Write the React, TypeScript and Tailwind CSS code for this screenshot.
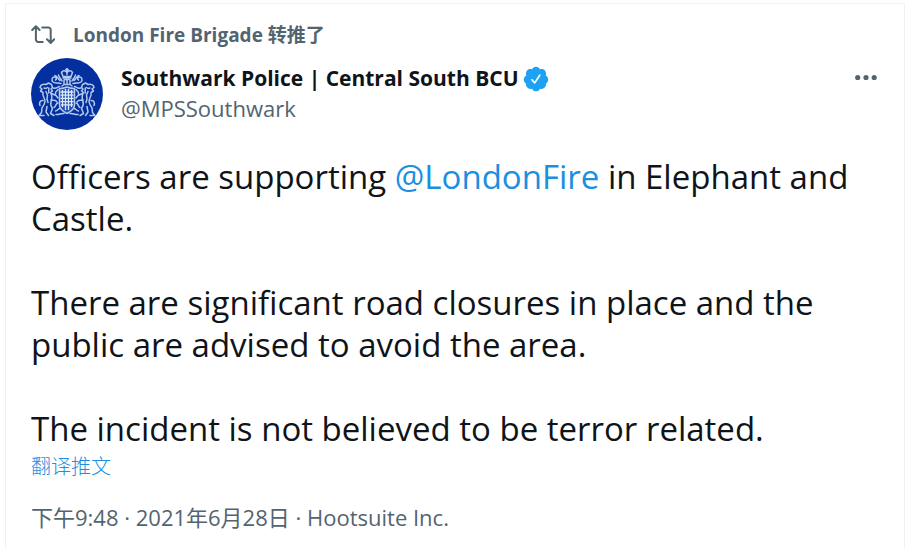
import type { ReactNode } from 'react'

function RetweetIcon() {
  return (
    <svg className="w-6 h-6 shrink-0" viewBox="0 0 24 24" fill="none" stroke="currentColor" strokeWidth="2" strokeLinecap="round" strokeLinejoin="round" aria-hidden="true">
      <path d="M1.200 7L4.900 3.200l3.700 3.800M4.900 3.800v12.700a2.400 2.400 0 0 0 2.400 2.400h4.400" />
      <path d="M11.200 4.400h6.100a2.400 2.400 0 0 1 2.400 2.400v12.700M16 16.200l3.700 3.800 3.500-3.800" />
    </svg>
  )
}

function VerifiedBadge() {
  return (
    <svg className="w-7 h-7 shrink-0" viewBox="0 0 24 24" fill="#1da1f2" role="img" aria-label="Verified account">
      <path d="M22.5 12.5c0-1.58-.875-2.95-2.148-3.6.154-.435.238-.905.238-1.4 0-2.21-1.71-3.998-3.818-3.998-.47 0-.92.084-1.336.25C14.818 2.415 13.51 1.5 12 1.5s-2.816.917-3.437 2.25c-.415-.165-.866-.25-1.336-.25-2.11 0-3.818 1.79-3.818 4 0 .494.083.964.237 1.4-1.272.65-2.147 2.018-2.147 3.6 0 1.495.782 2.798 1.942 3.486-.02.17-.032.34-.032.514 0 2.21 1.708 4 3.818 4 .47 0 .92-.086 1.335-.25.62 1.334 1.926 2.25 3.437 2.25 1.512 0 2.818-.916 3.437-2.25.415.163.865.248 1.336.248 2.11 0 3.818-1.79 3.818-4 0-.174-.012-.344-.033-.513 1.158-.687 1.943-1.99 1.943-3.484zm-6.616-3.334l-4.334 6.5c-.145.217-.382.334-.625.334-.143 0-.288-.04-.416-.126l-.115-.094-2.415-2.415c-.293-.293-.293-.768 0-1.06s.768-.294 1.06 0l1.77 1.767 3.825-5.74c.23-.345.696-.436 1.04-.207.346.23.44.696.21 1.04z" />
    </svg>
  )
}

// One side of the crest: lion supporter and mantling. Mirrored for the other side.
function Supporter() {
  return (
    <g>
      <path d="M15 26.500c-3-1-5.500.5-6 3l2 1.500-1.500 2 2.500 1.500M15 26.500l2.500-1.500 3 1.500 1 3-1.500 1.500 1.500 2-2 1.500M13 30l2 .5 1.500-1M12 35c-1 3 2 5 2 8 0 3-1.500 5-3 7l-.5 4.500-2.500 3h5M19.500 34.500c2 3.500 1.500 6.500.5 9.500-1 3 .5 5 1.500 6.500l-2 5 3.500 2M16 48.500l-1 5.500 2.500 3.500M20.500 35.500l4.500 2 2 2.500M19.800 42l4.700.5 1.500 1.500" />
      <path d="M15 33.500l1.500 3.500-.5 4 1 3.500M17.800 30v5M12 42.500c-3-.5-4 2.500-3 5" />
      <path d="M30 25.500c-3.500-1.500-5.500.5-8-1.500-2-1.600-1-5 1.500-5 2 0 2.500 2.500 1 3M29 22.500c-2-1-2.500-4.500-5-5M31 23c-1-2.500-3-3-3.500-6M28.500 28.500c-2 .5-3.500 2.500-6 1.500M27 31.500c-1 2-3 1.500-2.500 4.500M27 45c-2.500.5-2 3.500-4 4.500M29 50.500c-2 0-2.500 2.500-4.500 2.500M33 55.500c-3-.5-5 1.500-8 1" />
    </g>
  )
}

function CrestAvatar() {
  return (
    <svg className="w-18 h-18 shrink-0" viewBox="0 0 72 72" role="img" aria-label="Southwark Police">
      <circle cx="36" cy="36" r="36" fill="#04309f" />
      <g fill="none" stroke="#b3c9ee" strokeWidth="1.5" strokeLinecap="round" strokeLinejoin="round">
        <Supporter />
        <g transform="matrix(-1 0 0 1 72 0)">
          <Supporter />
        </g>
        <path d="M32 18.500l-1.500-4c1.500-2.500 4-2.300 5.500 0 1.500-2.300 4-2.500 5.500 0l-1.500 4zM36 10.500v6M34.800 11.500h2.400M32 20h8" />
        <path d="M33 22c1-1 5-1 6 0v4.500h-6zM36 22v4M31 28l2-1.500M41 28l-2-1.500" />
        <path d="M28.500 30.500c2.500 0 5-.5 7.500-1.500 2.500 1 5 1.500 7.500 1.500V47c0 4.500-3.500 6.500-7.500 8.500-4-2-7.500-4-7.500-8.500z" fill="#2450b0" />
      </g>
      <path d="M31.500 32v17M34.500 31v21M37.500 31v21M40.500 32v17M29.500 34h13M29.500 37.200h13M29.500 40.400h13M29.500 43.600h13M30 46.800h12" stroke="#dce8fb" strokeWidth="1.300" fill="none" />
    </svg>
  )
}

function Link({ children }: { children: ReactNode }) {
  return (
    <a href="#" className="text-[#1b8fe0] hover:underline">
      {children}
    </a>
  )
}

export default function App() {
  return (
    <main className="bg-white pl-[5px] pr-px pt-[3px] font-['Open_Sans','Noto_Sans_CJK_SC',sans-serif]">
      <article className="min-h-[calc(100vh-3px)] border-x border-t border-[#eff1f2] px-[25px] pt-[19px] text-[#536471]">
        <div className="flex h-6 items-center gap-[18px] text-[19px] font-bold">
          <RetweetIcon />
          <a href="#" className="hover:underline">London Fire Brigade 转推了</a>
        </div>

        <header className="mt-[11px] flex items-start gap-[18px]">
          <CrestAvatar />
          <div className="min-w-0 flex-1 pt-[6px]">
            <div className="flex h-[30px] items-center gap-[3px]">
              <a href="#" className="text-[21px] font-bold text-[#0f1419] hover:underline">
                Southwark Police | Central South BCU
              </a>
              <VerifiedBadge />
            </div>
            <div className="text-[22px] leading-7">@MPSSouthwark</div>
          </div>
          <button type="button" aria-label="More" className="mt-1 h-8 w-7 cursor-pointer">
            <svg className="h-8 w-7" viewBox="0 0 28 32" fill="currentColor" aria-hidden="true">
              <circle cx="6.700" cy="15.500" r="2.600" />
              <circle cx="15" cy="15.500" r="2.600" />
              <circle cx="23.200" cy="15.500" r="2.600" />
            </svg>
          </button>
        </header>

        <div className="mt-[26px] space-y-[42px] text-[33px] leading-[42px] text-[#0f1419]">
          <p>
            Officers are supporting <Link>@LondonFire</Link> in Elephant and Castle.
          </p>
          <p>There are significant road closures in place and the public are advised to avoid the area.</p>
          <p>The incident is not believed to be terror related.</p>
        </div>

        <button type="button" className="block cursor-pointer text-[20px] font-light leading-[34px] text-[#1b8fe0] hover:underline">
          翻译推文
        </button>

        <div className="mt-[17px] text-[22px] leading-8">
          <time dateTime="2021-06-28T21:48">下午9:48 · 2021年6月28日</time> · <a href="#" className="hover:underline">Hootsuite Inc.</a>
        </div>
      </article>
    </main>
  )
}
